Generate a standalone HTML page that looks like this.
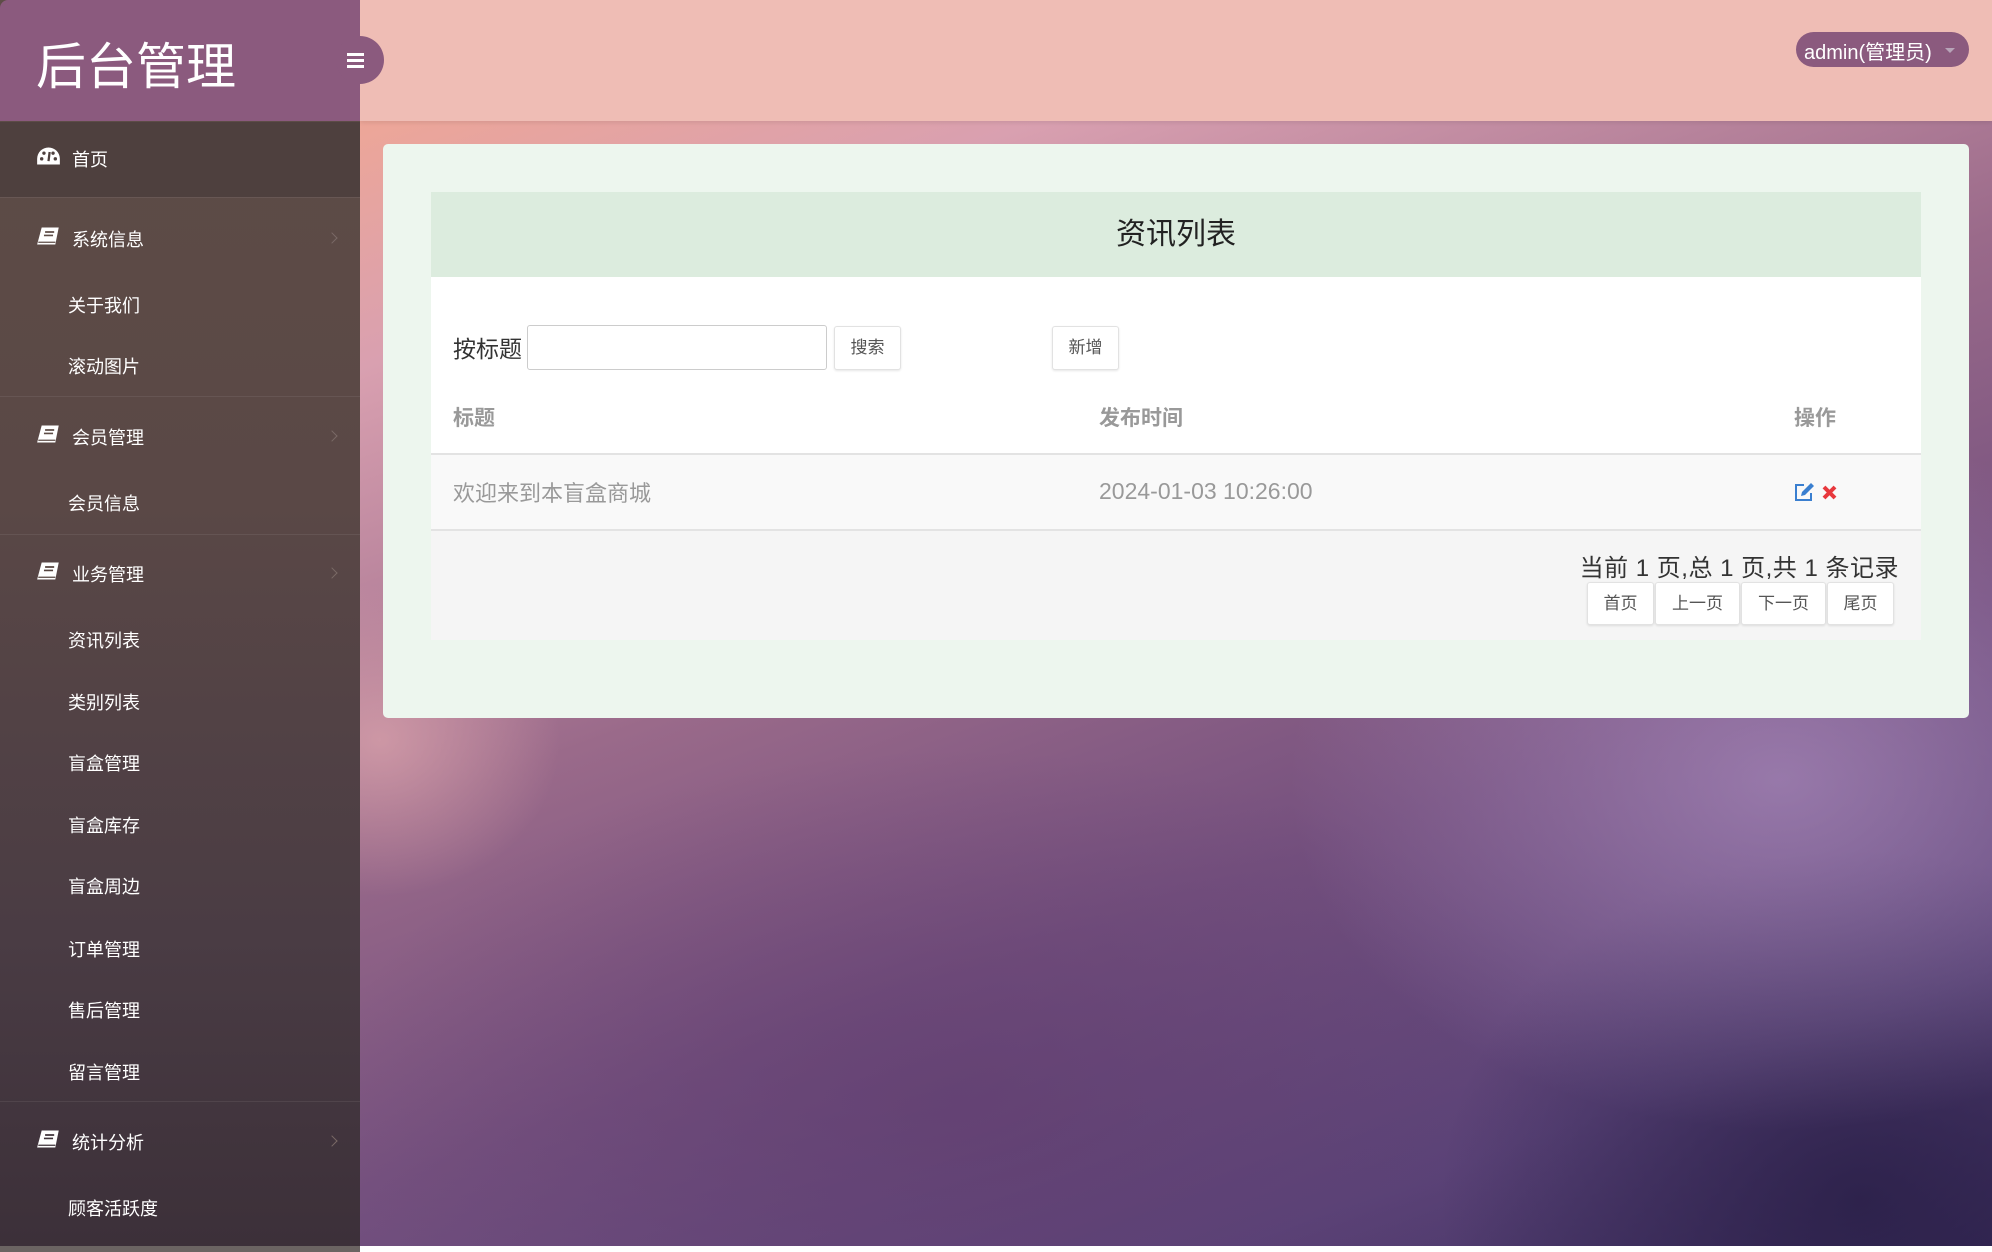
<!DOCTYPE html>
<html><head><meta charset="utf-8"><style>
*{margin:0;padding:0;box-sizing:border-box}
body{width:1992px;height:1252px;overflow:hidden;position:relative;font-family:"Liberation Sans","Noto Sans CJK SC",sans-serif;background:#fff}
#bg{position:absolute;left:360px;top:0;width:1632px;height:1246px;
background:
radial-gradient(ellipse 700px 500px at 1420px 780px,rgba(180,150,200,.6),transparent 70%),
radial-gradient(ellipse 600px 500px at 1500px 1200px,rgba(40,30,70,.8),transparent 70%),
radial-gradient(ellipse 300px 260px at 20px 740px,rgba(215,160,170,.8),transparent 60%),
radial-gradient(ellipse 900px 500px at 600px 1100px,rgba(95,60,110,.6),transparent 70%),
linear-gradient(160deg,#f7a98c 0%,#d9a0b0 20%,#9a6a8a 45%,#74507e 65%,#5a4378 85%,#3a2c5a 100%)}
#top{position:absolute;left:360px;top:0;width:1632px;height:121px;background:#efbdb5;box-shadow:0 2px 4px rgba(0,0,0,.08)}
#side{position:absolute;left:0;top:0;width:360px;height:1246px;background:linear-gradient(180deg,#5e4d47 0%,#5a4846 40%,#4a3c44 75%,#3c3039 100%)}
#sidebot{position:absolute;left:0;top:1246px;width:360px;height:6px;background:#6b6462}
#logo{position:absolute;left:0;top:0;width:360px;height:121px;background:#8b5a7e;color:#fff;font-size:50px;padding:42px 0 0 36px;line-height:1;border-top-left-radius:8px}
#tog{position:absolute;left:336px;top:36px;width:48px;height:48px;border-radius:24px;background:#8b5a7e}
#tog i{position:absolute;left:11px;width:17px;height:3px;background:#fff}
.home{position:absolute;left:0;top:122px;width:360px;height:75px;background:#4e403e}
.it{position:absolute;left:0;color:#fff;font-size:18px;white-space:nowrap}
.sub{left:68px}
.grp{left:72px}
.ico{position:absolute;left:36px;width:25px;height:20px}
.arr{position:absolute;left:328px;width:8px;height:8px;border-right:1.5px solid #7a6a66;border-top:1.5px solid #7a6a66;transform:rotate(45deg)}
.hr{position:absolute;left:0;width:360px;height:1px;background:rgba(255,255,255,.07)}
#admin{position:absolute;left:1796px;top:32px;width:173px;height:35px;border-radius:18px;background:#8b5a7e;color:#fff;font-size:20px;padding:4px 0 0 8px}
#admin b{position:absolute;right:14px;top:16px;border:5px solid transparent;border-top-color:#b7a4b8}
#card{position:absolute;left:383px;top:144px;width:1586px;height:574px;background:#edf6ee;border-radius:5px}
#hd{position:absolute;left:431px;top:192px;width:1490px;height:85px;background:#dcecde;text-align:center;font-size:30px;line-height:85px;color:#222}
#wh{position:absolute;left:431px;top:277px;width:1490px;height:176px;background:#fff}
#row{position:absolute;left:431px;top:453px;width:1490px;height:78px;background:#f9f9f9;border-top:2px solid #e3e3e3;border-bottom:2px solid #e3e3e3}
#ft{position:absolute;left:431px;top:531px;width:1490px;height:109px;background:#f5f5f5}
.t{position:absolute;white-space:nowrap}
.btn{position:absolute;background:#fff;border:1px solid #e2e2e2;border-radius:3px;font-size:17px;color:#555;text-align:center;box-shadow:0 1px 2px rgba(0,0,0,.1)}
</style></head><body>
<div id="bg"></div>
<div id="top"></div>
<div id="side"></div><div id="sidebot"></div>
<div id="logo">后台管理</div>
<div id="tog"><i style="top:17px"></i><i style="top:23px"></i><i style="top:29px"></i></div>
<div class="home"></div>
<svg class="ico" style="top:146px" viewBox="0 0 22 17"><path d="M11 1A10 10 0 0 0 1 11v5h20v-5A10 10 0 0 0 11 1z" fill="#fff"/><circle cx="5" cy="11" r="1.5" fill="#4e403e"/><circle cx="7" cy="6" r="1.5" fill="#4e403e"/><circle cx="15" cy="6" r="1.5" fill="#4e403e"/><circle cx="17" cy="11" r="1.5" fill="#4e403e"/><path d="M11 13L12 5" stroke="#4e403e" stroke-width="2"/></svg>
<div class="it grp" style="top:146px">首页</div>
<div class="hr" style="top:197px"></div>
<svg class="ico" style="top:226px" viewBox="0 0 22 17"><path d="M5 1h15l-3 15H1z" fill="#fff"/><path d="M8 5h8M7 8h8" stroke="#5e4d47" stroke-width="1.5"/><path d="M2 14h15" stroke="#5e4d47" stroke-width="1"/></svg>
<div class="it grp" style="top:226px">系统信息</div><div class="arr" style="top:234px"></div>
<div class="it sub" style="top:292px">关于我们</div>
<div class="it sub" style="top:353px">滚动图片</div>
<div class="hr" style="top:396px"></div>
<svg class="ico" style="top:424px" viewBox="0 0 22 17"><path d="M5 1h15l-3 15H1z" fill="#fff"/><path d="M8 5h8M7 8h8" stroke="#5e4d47" stroke-width="1.5"/><path d="M2 14h15" stroke="#5e4d47" stroke-width="1"/></svg>
<div class="it grp" style="top:424px">会员管理</div><div class="arr" style="top:432px"></div>
<div class="it sub" style="top:490px">会员信息</div>
<div class="hr" style="top:534px"></div>
<svg class="ico" style="top:561px" viewBox="0 0 22 17"><path d="M5 1h15l-3 15H1z" fill="#fff"/><path d="M8 5h8M7 8h8" stroke="#55443f" stroke-width="1.5"/><path d="M2 14h15" stroke="#55443f" stroke-width="1"/></svg>
<div class="it grp" style="top:561px">业务管理</div><div class="arr" style="top:569px"></div>
<div class="it sub" style="top:627px">资讯列表</div>
<div class="it sub" style="top:689px">类别列表</div>
<div class="it sub" style="top:750px">盲盒管理</div>
<div class="it sub" style="top:812px">盲盒库存</div>
<div class="it sub" style="top:873px">盲盒周边</div>
<div class="it sub" style="top:936px">订单管理</div>
<div class="it sub" style="top:997px">售后管理</div>
<div class="it sub" style="top:1059px">留言管理</div>
<div class="hr" style="top:1101px"></div>
<svg class="ico" style="top:1129px" viewBox="0 0 22 17"><path d="M5 1h15l-3 15H1z" fill="#fff"/><path d="M8 5h8M7 8h8" stroke="#3e3239" stroke-width="1.5"/><path d="M2 14h15" stroke="#3e3239" stroke-width="1"/></svg>
<div class="it grp" style="top:1129px">统计分析</div><div class="arr" style="top:1137px"></div>
<div class="it sub" style="top:1195px">顾客活跃度</div>

<div id="admin">admin(管理员)<b></b></div>
<div id="card"></div>
<div id="hd">资讯列表</div>
<div id="wh"></div>
<div id="row"></div>
<div id="ft"></div>
<div class="t" style="left:453px;top:330px;font-size:23px;color:#333">按标题</div>
<div style="position:absolute;left:527px;top:325px;width:300px;height:45px;border:1px solid #ccc;border-radius:3px;background:#fff"></div>
<div class="btn" style="left:834px;top:326px;width:67px;height:44px;line-height:42px">搜索</div>
<div class="btn" style="left:1052px;top:326px;width:67px;height:44px;line-height:42px">新增</div>
<div class="t" style="left:453px;top:402px;font-size:21px;color:#999;font-weight:bold">标题</div>
<div class="t" style="left:1099px;top:402px;font-size:21px;color:#999;font-weight:bold">发布时间</div>
<div class="t" style="left:1794px;top:402px;font-size:21px;color:#999;font-weight:bold">操作</div>
<div class="t" style="left:453px;top:476px;font-size:22px;color:#999">欢迎来到本盲盒商城</div>
<div class="t" style="left:1099px;top:478px;font-size:23px;color:#999">2024-01-03 10:26:00</div>
<svg style="position:absolute;left:1793px;top:482px" width="22" height="20" viewBox="0 0 22 20"><path d="M11 3H3v15h15v-7" fill="none" stroke="#3a7fd0" stroke-width="2"/><path d="M8 14l1-4 9-9 3 3-9 9z" fill="#3a7fd0"/></svg>
<svg style="position:absolute;left:1822px;top:485px" width="15" height="15" viewBox="0 0 15 15"><path d="M2 2l11 11M13 2L2 13" stroke="#e8383d" stroke-width="4"/></svg>
<div class="t" style="right:93px;top:548px;font-size:24px;color:#333;letter-spacing:.5px">当前 1 页,总 1 页,共 1 条记录</div>
<div class="btn" style="left:1587px;top:582px;width:67px;height:43px;line-height:41px">首页</div>
<div class="btn" style="left:1655px;top:582px;width:85px;height:43px;line-height:41px">上一页</div>
<div class="btn" style="left:1741px;top:582px;width:85px;height:43px;line-height:41px">下一页</div>
<div class="btn" style="left:1827px;top:582px;width:67px;height:43px;line-height:41px">尾页</div>
</body></html>
